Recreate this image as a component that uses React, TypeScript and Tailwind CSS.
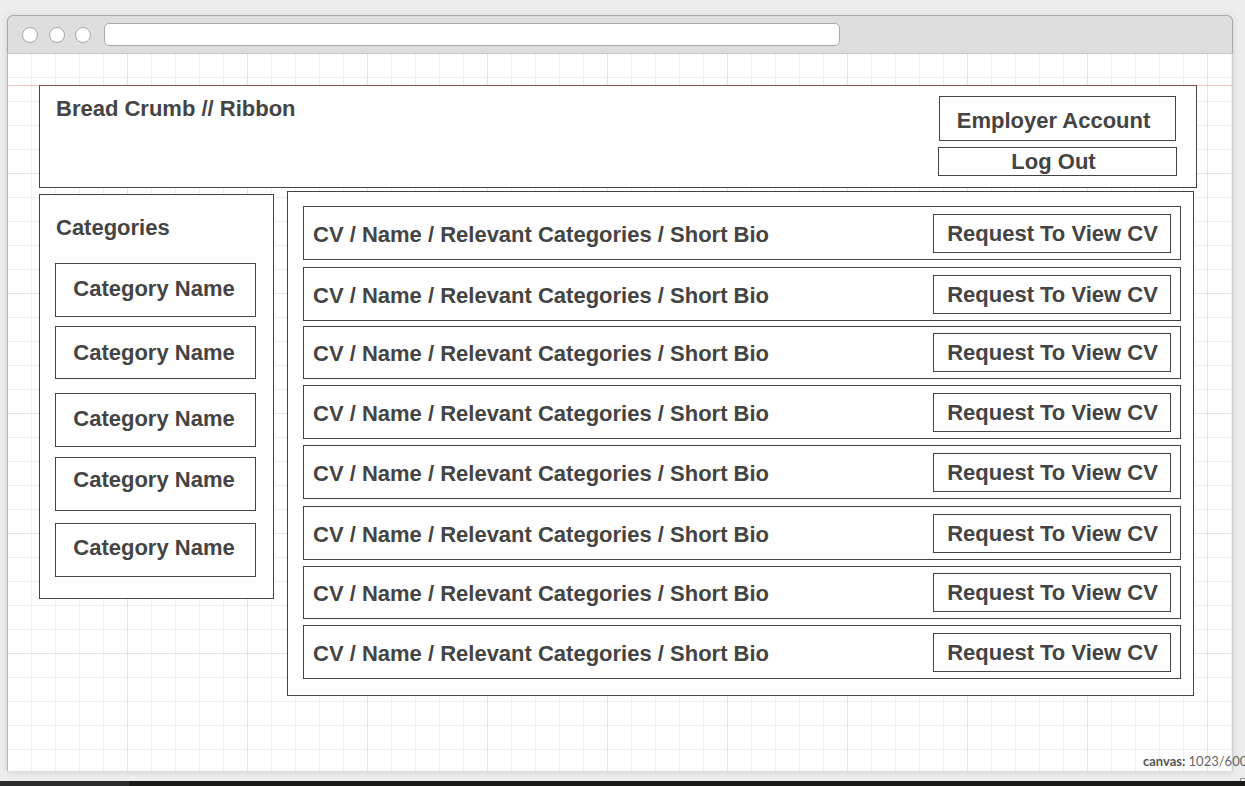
const categories = [
  { cls: "mt-[22px] h-[54px] pb-[3px]" },
  { cls: "mt-[9px] h-[53px] pt-[1px]" },
  { cls: "mt-[14px] h-[54px] pb-[2px]" },
  { cls: "mt-[10px] h-[54px] pb-[8px]" },
  { cls: "mt-[12px] h-[54px] pb-[4px]" },
];

const rows = [
  { cls: "h-[54px]" },
  { cls: "mt-[7px] h-[54px]" },
  { cls: "mt-[5px] h-[53px]" },
  { cls: "mt-[6px] h-[54px]" },
  { cls: "mt-[6px] h-[54px]" },
  { cls: "mt-[7px] h-[54px]" },
  { cls: "mt-[6px] h-[53px]" },
  { cls: "mt-[6px] h-[54px]" },
];

const TitleBar = () => (
  <div className="flex h-[39px] items-center rounded-t-[6px] border-x border-t border-b border-[#a9a9a9] border-b-[#c4c4c4] bg-[#dedede] pl-[14px]">
    <div className="h-[16px] w-[16px] rounded-full border border-[#a8a8a8] bg-white" />
    <div className="ml-[11px] h-[16px] w-[16px] rounded-full border border-[#a8a8a8] bg-white" />
    <div className="ml-[10px] h-[16px] w-[16px] rounded-full border border-[#a8a8a8] bg-white" />
    <div className="ml-[13px] h-[23px] w-[736px] rounded-[5px] border border-[#a8a8a8] bg-white" />
  </div>
);

export default function App() {
  return (
    <div className="relative h-[786px] w-[1245px] overflow-hidden bg-[#ededed] font-['Liberation_Sans',Arial,sans-serif] text-[22px] font-bold leading-[26px] text-[#444]">
      <div className="pl-[7px] pt-[15px]">
        <div className="w-[1226px] shadow-[0_1px_6px_rgba(0,0,0,0.12)]">
          <TitleBar />

          {/* Canvas */}
          <div className="relative h-[717px] border-l border-r border-l-[#e9a394] border-r-[#cfcfcf] bg-white bg-[linear-gradient(to_right,#e5e5e5_1px,transparent_1px),linear-gradient(to_bottom,#e5e5e5_1px,transparent_1px),linear-gradient(to_right,#efefef_1px,transparent_1px),linear-gradient(to_bottom,#efefef_1px,transparent_1px)] bg-[size:120px_120px,120px_120px,24px_24px,24px_24px] bg-[position:119px_119px,119px_119px,23px_23px,23px_23px] pl-[31px] pt-[31px]">
            {/* Header / ribbon */}
            <div className="flex h-[103px] w-[1158px] justify-between border border-[#444] bg-white">
              <div className="pl-[16px] pt-[10px]">Bread Crumb // Ribbon</div>
              <div className="mr-[19px] flex w-[239px] flex-col items-center pt-[10px]">
                <div className="flex h-[45px] w-[237px] items-center justify-center border border-[#444] pr-[8px] pt-[4px]">
                  Employer Account
                </div>
                <div className="mt-[6px] flex h-[29px] w-[239px] items-center justify-center border border-[#444] pr-[8px]">
                  Log Out
                </div>
              </div>
            </div>

            <div className="flex items-start">
              {/* Categories */}
              <div className="mt-[6px] h-[405px] w-[235px] border border-[#444] bg-white pl-[15px] pt-[20px]">
                <div className="pl-[1px]">Categories</div>
                {categories.map((c, i) => (
                  <div
                    key={i}
                    className={`${c.cls} flex w-[201px] items-center justify-center border border-[#444] pr-[3px]`}
                  >
                    Category Name
                  </div>
                ))}
              </div>

              {/* CV list */}
              <div className="ml-[13px] mt-[3px] h-[505px] w-[907px] border border-[#444] bg-white pl-[15px] pt-[14px]">
                {rows.map((r, i) => (
                  <div
                    key={i}
                    className={`${r.cls} flex w-[878px] items-center justify-between border border-[#444] pl-[9px] pr-[9px]`}
                  >
                    <span className="pt-[3px]">CV / Name / Relevant Categories / Short Bio</span>
                    <div className="flex h-[39px] w-[238px] items-center justify-center border border-[#444] pl-[1px] pt-[1px]">
                      Request To View CV
                    </div>
                  </div>
                ))}
              </div>
            </div>

            {/* guide line */}
            <div className="absolute left-0 right-0 top-[31px] h-px bg-[#e0664f]/40" />
          </div>
        </div>
      </div>

      {/* bottom strip */}
      <div className="mt-[10px] flex h-[5px]">
        <div className="w-[129px] bg-[#2c2c2c]" />
        <div className="flex-1 bg-[#1c1a17]" />
      </div>

      <div className="absolute left-[1143px] top-[754px] whitespace-nowrap font-['Lato',sans-serif] text-[13px] leading-[15px] text-[#555]">
        <span className="font-bold">canvas:</span>{" "}
        <span className="font-normal text-[#666]">1023/600</span>
      </div>
      <div className="absolute left-[1240px] top-[778px] h-[3px] w-[6px] border-l border-t border-[#9a9a9a]" />
    </div>
  );
}
